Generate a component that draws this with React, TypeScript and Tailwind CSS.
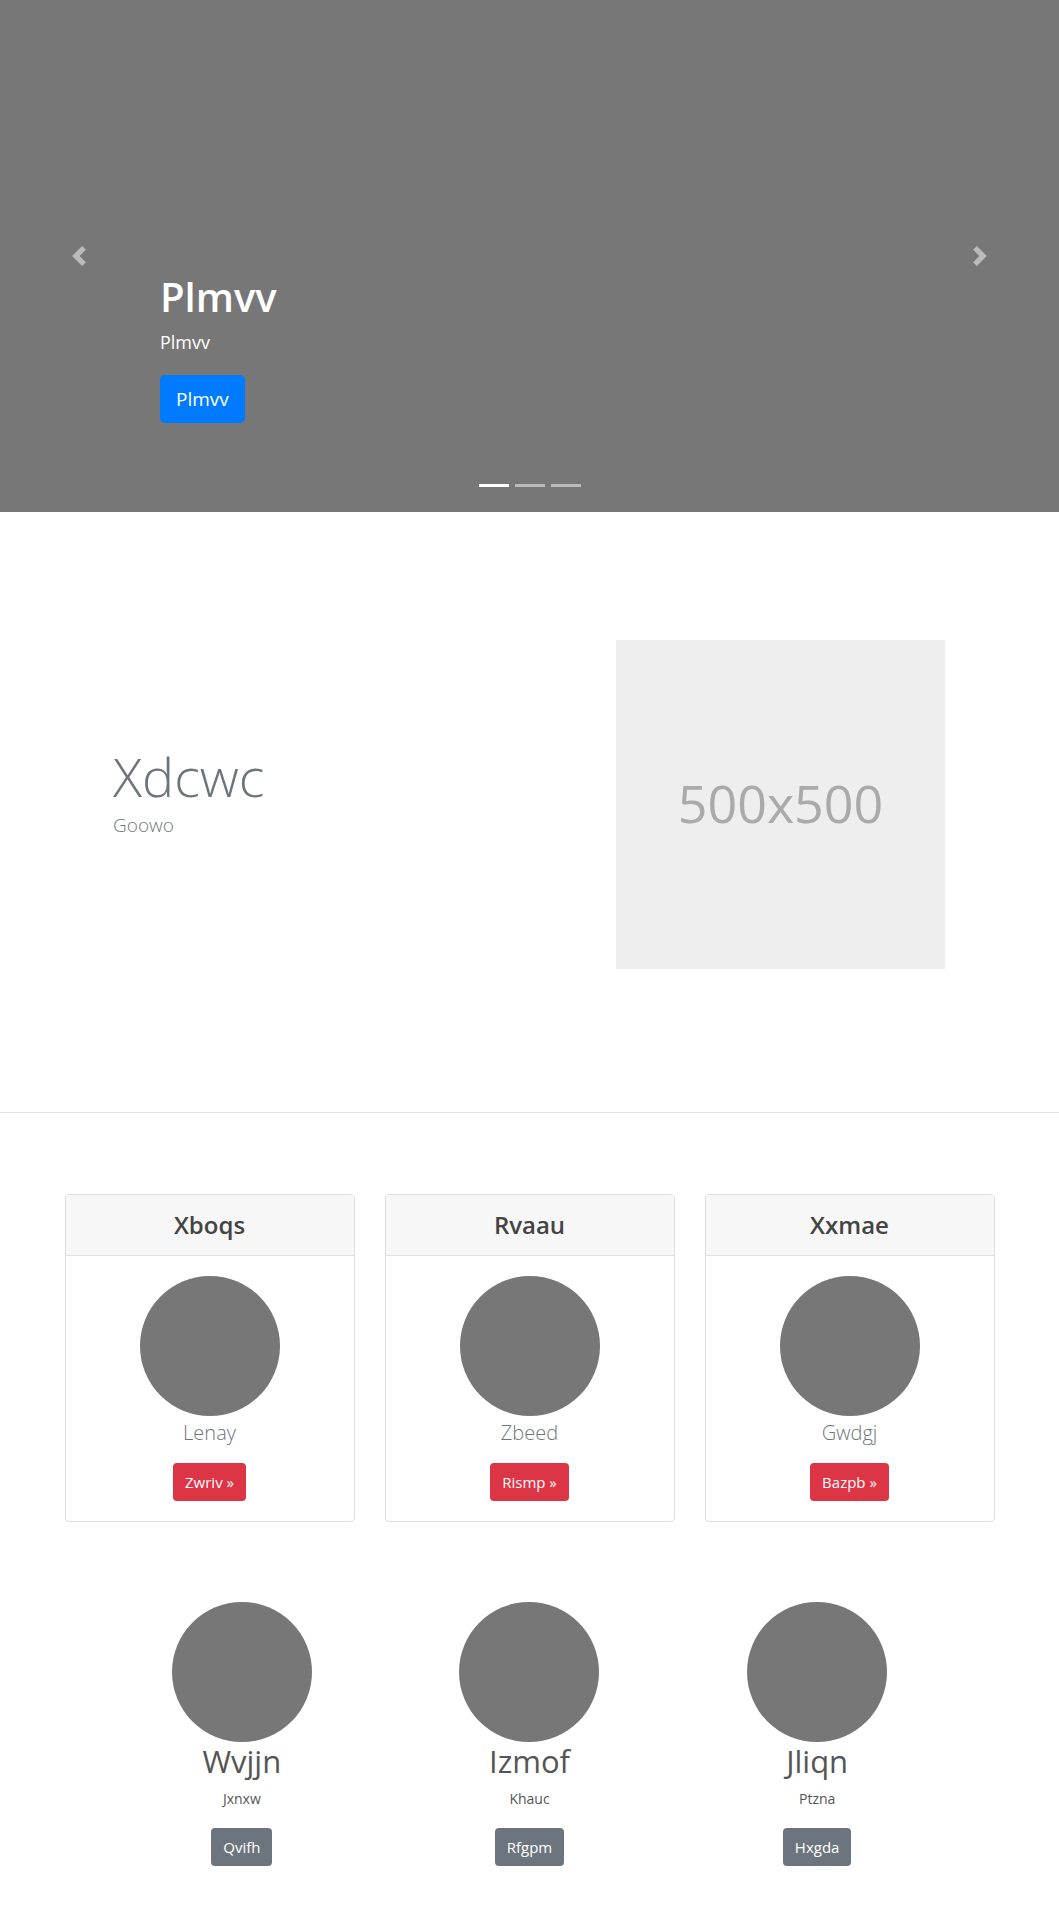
const font = { fontFamily: '"Open Sans", "Noto Sans", Arial, sans-serif' };

const cards = [
  { title: 'Xboqs', name: 'Lenay', action: 'Zwriv' },
  { title: 'Rvaau', name: 'Zbeed', action: 'Rismp' },
  { title: 'Xxmae', name: 'Gwdgj', action: 'Bazpb' },
];

const people = [
  { name: 'Wvjjn', sub: 'Jxnxw', action: 'Qvifh' },
  { name: 'Izmof', sub: 'Khauc', action: 'Rfgpm' },
  { name: 'Jliqn', sub: 'Ptzna', action: 'Hxgda' },
];

const Chevron = ({ dir }: { dir: 'prev' | 'next' }) => (
  <svg width="20" height="20" viewBox="0 0 8 8" fill="#fff" fillOpacity={0.5}>
    {dir === 'prev' ? (
      <path d="M5.25 0l-4 4 4 4 1.5-1.5-2.5-2.5 2.5-2.5-1.5-1.5z" />
    ) : (
      <path d="M2.75 0l-1.5 1.5 2.5 2.5-2.5 2.5 1.5 1.5 4-4-4-4z" />
    )}
  </svg>
);

const Carousel = () => (
  <div className="relative h-[512px] bg-[#777] flex flex-col justify-end pb-[89px] pl-[160px]">
    <h1 className="text-[40px] leading-[48px] font-semibold text-white mb-2">Plmvv</h1>
    <p className="text-[18px] leading-[27px] text-white mb-[19px]">Plmvv</p>
    <div>
      <button className="h-[48px] px-4 rounded-[5px] bg-[#007bff] text-white text-[19px]">Plmvv</button>
    </div>
    <div className="absolute left-[69px] top-[246px]">
      <Chevron dir="prev" />
    </div>
    <div className="absolute left-[970px] top-[246px]">
      <Chevron dir="next" />
    </div>
    <div className="absolute top-[484px] left-0 right-0 flex justify-center gap-[6px]">
      <span className="w-[30px] h-[3px] bg-white" />
      <span className="w-[30px] h-[3px] bg-[#bbb]" />
      <span className="w-[30px] h-[3px] bg-[#bbb]" />
    </div>
  </div>
);

const Featurette = () => (
  <div className="flex items-start pt-[128px] pb-[143px] border-b border-[#e3e3e3]">
    <div className="w-[616px] shrink-0 pl-[113px] mt-[103px]">
      <h2 className="text-[54px] leading-[67px] font-light text-[#6c757d]">Xdcwc</h2>
      <p className="text-[19px] leading-[30px] font-light text-[#6c757d]">Goowo</p>
    </div>
    <div className="w-[329px] h-[329px] shrink-0 bg-[#eee] flex items-center justify-center pb-[4px]">
      <span className="text-[52px] text-[#aaa]">500x500</span>
    </div>
  </div>
);

const Cards = () => (
  <div className="w-[930px] mx-auto mt-[81px] grid grid-cols-3 gap-[30px]">
    {cards.map((c) => (
      <div key={c.title} className="border border-[#dfdfdf] rounded-[4px] overflow-hidden">
        <div className="h-[61px] bg-[#f7f7f7] border-b border-[#dfdfdf] flex items-center justify-center">
          <h4 className="text-[24px] font-semibold text-[#444]">{c.title}</h4>
        </div>
        <div className="pt-5 pb-5 flex flex-col items-center">
          <div className="w-[140px] h-[140px] rounded-full bg-[#777]" />
          <p className="text-[20px] leading-[30px] font-light text-[#6c757d] mt-[2px] mb-[15px]">{c.name}</p>
          <button className="h-[38px] px-3 rounded-[4px] bg-[#dc3545] text-white text-[15px]">
            {c.action} »
          </button>
        </div>
      </div>
    ))}
  </div>
);

const People = () => (
  <div className="w-[863px] mx-auto mt-[80px] pb-[54px] grid grid-cols-3">
    {people.map((p) => (
      <div key={p.name} className="flex flex-col items-center">
        <div className="w-[140px] h-[140px] rounded-full bg-[#777]" />
        <h2 className="text-[31px] leading-[38px] text-[#555]">{p.name}</h2>
        <p className="mt-2 text-[14px] leading-[21px] text-[#555] mb-[19px]">{p.sub}</p>
        <button className="h-[38px] px-3 rounded-[4px] bg-[#6c757d] text-white text-[15px]">{p.action}</button>
      </div>
    ))}
  </div>
);

export default function App() {
  return (
    <div className="w-[1059px] bg-white" style={font}>
      <Carousel />
      <Featurette />
      <Cards />
      <People />
    </div>
  );
}
